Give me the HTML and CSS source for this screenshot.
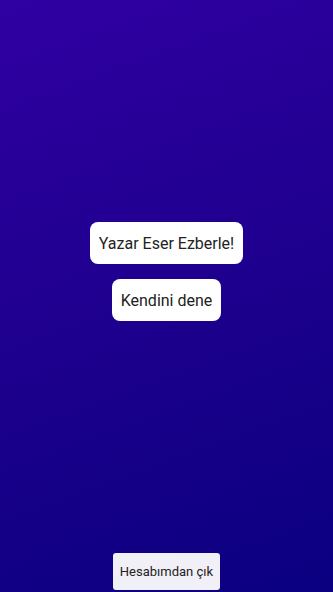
FILE: index.html
```html
<!DOCTYPE html>
<html lang="tr">
<head>
    <meta charset="UTF-8">
    <meta name="viewport" content="width=device-width, initial-scale=1.0">
    <title>Yazar Eser</title>
    <link rel="stylesheet" href="styles.css">
</head>
<body>
    <div class="screen">
        <main class="menu">
            <button class="menu-btn">Yazar Eser Ezberle!</button>
            <button class="menu-btn">Kendini dene</button>
        </main>
        <footer class="bottom">
            <button class="logout-btn">Hesabımdan çık</button>
        </footer>
    </div>
</body>
</html>
```

FILE: styles.css
```css
html, body {
    height: 100%;
}

body {
    margin: 0;
    font-family: Roboto, "Noto Sans", sans-serif;
    background: linear-gradient(160deg, #3000a2 0%, #1e008e 50%, #0a0080 100%);
}

.screen {
    height: 100%;
    display: flex;
    flex-direction: column;
}

.menu {
    flex: 1;
    display: flex;
    flex-direction: column;
    align-items: center;
    justify-content: center;
    gap: 15px;
    padding-bottom: 10px;
}

.menu-btn {
    font-family: inherit;
    font-size: 16px;
    color: #222;
    background-color: #fff;
    border: none;
    border-radius: 8px;
    height: 42px;
    padding: 0 9px;
    cursor: pointer;
}

.bottom {
    display: flex;
    justify-content: center;
    padding-bottom: 2px;
}

.logout-btn {
    font-family: inherit;
    font-size: 13px;
    color: #222;
    background-color: #f1f0f6;
    border: none;
    border-radius: 3px;
    height: 37px;
    padding: 0 7px;
    cursor: pointer;
}
```
